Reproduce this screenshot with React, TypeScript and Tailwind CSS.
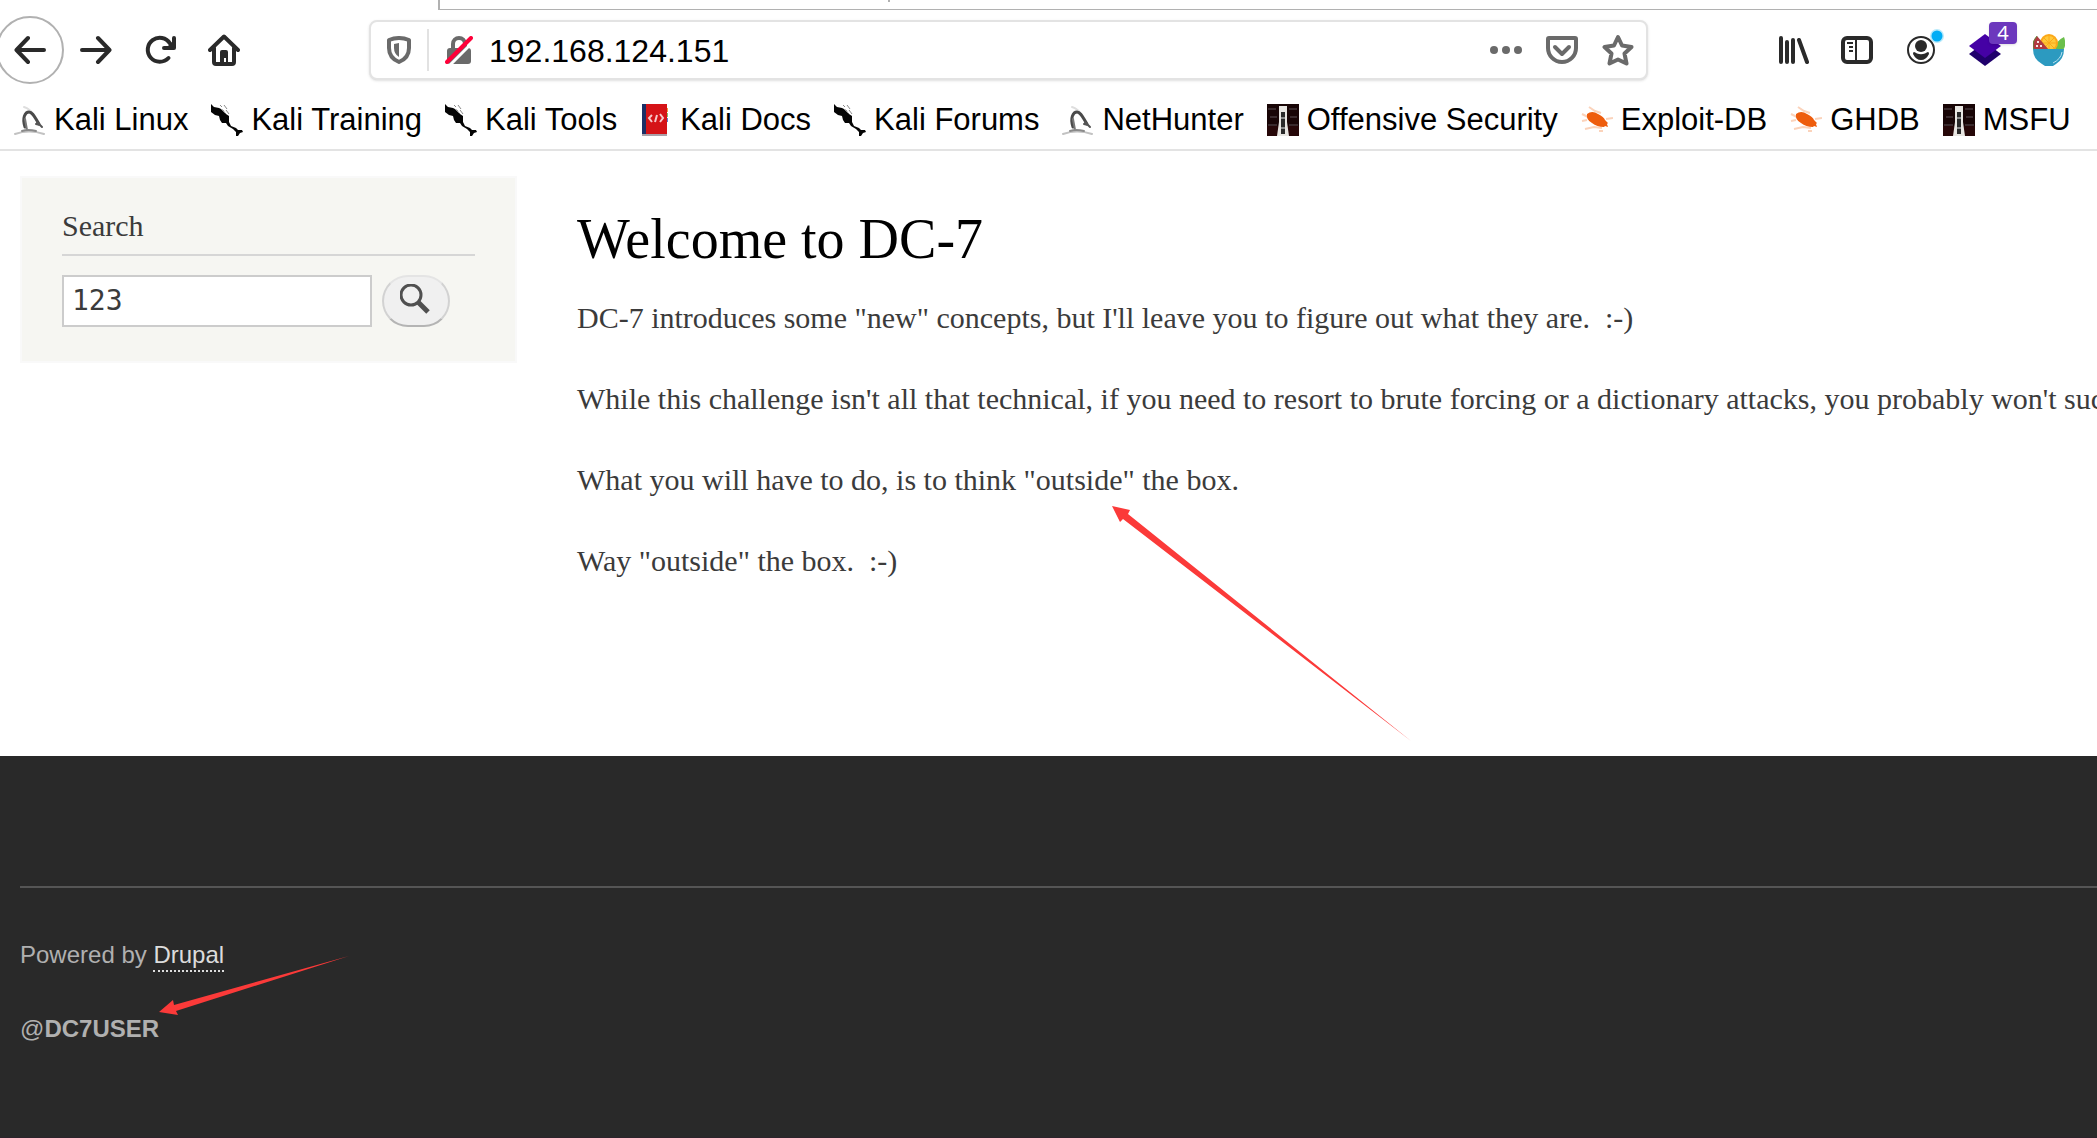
import React from "react";

type IconProps = { className?: string };

const Back = () => (
  <svg viewBox="0 0 32 32" className="size-8" fill="none" stroke="#2a2a2a" strokeWidth="4" strokeLinecap="round" strokeLinejoin="round">
    <path d="M14 4 2.500 16 14 28M3 16h27" />
  </svg>
);
const Forward = () => (
  <svg viewBox="0 0 32 32" className="size-8" fill="none" stroke="#2a2a2a" strokeWidth="4" strokeLinecap="round" strokeLinejoin="round">
    <path d="M18 4 29.500 16 18 28M29 16H2" />
  </svg>
);
const Reload = () => (
  <svg viewBox="0 0 32 32" className="size-8" fill="none" stroke="#2a2a2a" strokeWidth="4" strokeLinecap="round">
    <path d="M24.500 24A12 12 0 1 1 26 9.500" />
    <path d="M30 4v10M30 14H20" strokeLinejoin="round" />
    <path d="M28 8v6h-6z" fill="#2a2a2a" stroke="none" />
  </svg>
);
const Home = () => (
  <svg viewBox="0 0 32 32" className="size-8" fill="none" stroke="#2a2a2a" strokeWidth="4" strokeLinecap="round" strokeLinejoin="round">
    <path d="M2 16 16 2.500 30 16" />
    <path d="M6 14v14q0 2 2 2h16q2 0 2-2V14" />
    <path d="M12 30V18q0-2 2-2h4q2 0 2 2v12h-2v-6h-2v6z" fill="#2a2a2a" stroke="none" />
  </svg>
);
const Shield = () => (
  <svg viewBox="0 0 24 28" className="h-7 w-6">
    <path d="M2 4q10-4 20 0v8q0 10-10 14Q2 22 2 12z" fill="none" stroke="#6a6a6a" strokeWidth="4" strokeLinejoin="round" />
    <path d="M12 7v14q-5-3-5-9V8z" fill="#6a6a6a" />
  </svg>
);
const BrokenLock = () => (
  <svg viewBox="0 0 28 28" className="size-7">
    <path d="M8 14V8a6 6 0 0 1 12 0v6" fill="none" stroke="#6a6a6a" strokeWidth="4" />
    <rect x="2" y="12" width="24" height="16" rx="3" fill="#6a6a6a" />
    <path d="M5 29 29 5" stroke="#fff" strokeWidth="3" />
    <path d="M2 26 26 2" stroke="#ff0039" strokeWidth="4" strokeLinecap="round" />
  </svg>
);
const Dots = () => (
  <svg viewBox="0 0 32 32" className="size-8" fill="#6a6a6a">
    <circle cx="4" cy="16" r="4" />
    <circle cx="16" cy="16" r="4" />
    <circle cx="28" cy="16" r="4" />
  </svg>
);
const Pocket = () => (
  <svg viewBox="0 0 32 32" className="size-8" fill="none" stroke="#6a6a6a" strokeWidth="4" strokeLinecap="round" strokeLinejoin="round">
    <path d="M3 4h26q1 0 1 1v9a14 14 0 0 1-28 0V5q0-1 1-1z" />
    <path d="M9 13l7 7 7-7" />
  </svg>
);
const Star = () => (
  <svg viewBox="0 0 32 32" className="size-8" fill="none" stroke="#6a6a6a" strokeWidth="4" strokeLinejoin="round">
    <path d="M16 3l4 8.500 9.500 1.500-7 6.500 2 10-8.500-4-8.500 4 2-10-7-6.500L12 11.500z" />
  </svg>
);
const Library = () => (
  <svg viewBox="0 0 32 32" className="size-8" fill="none" stroke="#2a2a2a" strokeWidth="4" strokeLinecap="round">
    <path d="M4 4v24M10 8v20M16 6v22M22 6l8 22" />
  </svg>
);
const Sidebar = () => (
  <svg viewBox="0 0 32 32" className="size-8" fill="none" stroke="#2a2a2a">
    <rect x="2" y="4" width="28" height="24" rx="4" strokeWidth="4" />
    <path d="M15 4v24" strokeWidth="2" />
    <path d="M6 9h6M8 13h4M8 17h4" strokeWidth="2" />
  </svg>
);
const Account = () => (
  <svg viewBox="0 0 32 32" className="size-8 overflow-visible">
    <circle cx="16" cy="16" r="13" fill="none" stroke="#2a2a2a" strokeWidth="2" />
    <circle cx="16" cy="12" r="6" fill="#2a2a2a" />
    <path d="M9 18q-1 0-1 2 3 6 8 6t8-6q0-2-1-2-1 0-3 1.500-4 1.500-8 0Q10 18 9 18z" fill="#2a2a2a" />
    <circle cx="32" cy="2" r="7" fill="#b8eafb" />
    <circle cx="32" cy="2" r="5.500" fill="#00adf5" />
  </svg>
);
const Stack = () => (
  <svg viewBox="0 0 32 32" className="size-8">
    <path d="M0 20 16 8l16 12-16 12z" fill="#20006c" />
    <path d="M0 12 16 0l16 12-16 12z" fill="#4501a5" />
  </svg>
);
const FruitBowl = () => (
  <svg viewBox="0 0 32 32" className="size-8">
    <path d="M22 16q0-9 9-13 3 8-1 13z" fill="#6abf4b" />
    <circle cx="16" cy="9" r="9" fill="#fba819" />
    <circle cx="16" cy="9" r="7" fill="#ffc93a" />
    <path d="M16 2v14M9 9h14M21 4 11 14M11 4l10 10" stroke="#fba819" strokeWidth="1" />
    <path d="M4 2Q-3 9 1 16h15z" fill="#b13a40" />
    <path d="M4 2Q-2 9 1 16" fill="none" stroke="#5f8a3c" strokeWidth="1" />
    <path d="M4 8h2M7 12h2M3 12h2" stroke="#f7e5e5" strokeWidth="2" />
    <path d="M0 15h31q0 10-8 15l-3 2h-8l-3-2Q0 25 0 15z" fill="#2c9ac0" />
    <path d="M29 18q-1 7-9 11" fill="none" stroke="#bfe3ef" strokeWidth="1" />
  </svg>
);

const Dragon = ({ className }: IconProps) => (
  <svg viewBox="0 0 32 32" className={className} fill="none" strokeLinecap="round">
    <path d="M10 3q6 2 9 7" stroke="#dedede" strokeWidth="2" />
    <path d="M11 23C8 14 11 8 15 8c4 0 6 6 10 12" stroke="#4a4a4a" strokeWidth="3" />
    <path d="M11 15l2 11" stroke="#777" strokeWidth="2" />
    <path d="M23 18l5 5M22 20l4 1" stroke="#555" strokeWidth="2" />
    <path d="M1 30q14-5 29 0" stroke="#c2c2c2" strokeWidth="2" />
    <path d="M8 27q6-2 14 0" stroke="#8a8a8a" strokeWidth="2" />
  </svg>
);
const Knife = ({ className }: IconProps) => (
  <svg viewBox="0 0 32 32" className={className}>
    <path d="M0 0l3 3 5 1 4 2 3 4 3 2v6l2 4 5 2 2 2h4l1 2-3 1-2 3h-2v-4l-3-3-5-3-2-3h-4l-2-3-1-4-4-1-4-3z" fill="#050505" />
    <path d="M9 1l2 2M13 1l3 4M10 5l4 4M15 6l3 4" stroke="#8b8b8b" strokeWidth="1" />
  </svg>
);
const Book = ({ className }: IconProps) => (
  <svg viewBox="0 0 32 32" className={className}>
    <path d="M2 0h4v31H2z" fill="#1c2f66" />
    <path d="M2 30h25v2H2z" fill="#a9a0a8" />
    <path d="M6 0h21v30H6z" fill="#d51317" />
    <path d="M27 4h1v4h-1z" fill="#f09a3e" />
    <path d="M27 9h1v4h-1z" fill="#7fc46b" />
    <path d="M27 14h1v4h-1z" fill="#5b7fd0" />
    <path d="M12 11l-3 3 3 4M20 10l3 4-3 4M17 11l-2 7" fill="none" stroke="#f6c9ca" strokeWidth="2" />
  </svg>
);
const Tower = ({ className }: IconProps) => (
  <svg viewBox="0 0 32 32" className={className}>
    <path d="M0 0h32v32H0z" fill="#180506" />
    <path d="M0 22h32v10H0z" fill="#260708" />
    <path d="M1 5h8M3 13h7M1 21h9M22 5h8M23 13h7M22 21h9" stroke="#392a2d" strokeWidth="2" />
    <path d="M12 2h8v16l2 14H10l2-14z" fill="#e8e6e2" />
    <path d="M14 8h4v22h-4z" fill="#2a2a2a" />
    <path d="M14 14h4M14 24h4" stroke="#8a8a8a" strokeWidth="2" />
  </svg>
);
const Bug = ({ className }: IconProps) => (
  <svg viewBox="0 0 32 32" className={className} fill="none">
    <path d="M8 3l6 4 6 2M1 10l6 3M1 17l5-1M4 25l9-2 8 1M18 27l4 0M25 15l7-1" stroke="#fbd3bb" strokeWidth="2" />
    <path d="M6 10q5-4 11 0 6 3 7 6l3 3-1 1 1 3-3-1-1 1q-7 0-12-4-6-3-5-9z" fill="#ee5d0d" />
  </svg>
);

const bookmarks = [
  { label: "Kali Linux", Icon: Dragon },
  { label: "Kali Training", Icon: Knife },
  { label: "Kali Tools", Icon: Knife },
  { label: "Kali Docs", Icon: Book },
  { label: "Kali Forums", Icon: Knife },
  { label: "NetHunter", Icon: Dragon },
  { label: "Offensive Security", Icon: Tower },
  { label: "Exploit-DB", Icon: Bug },
  { label: "GHDB", Icon: Bug },
  { label: "MSFU", Icon: Tower },
];

function Toolbar() {
  return (
    <div className="flex h-20 items-center">
      <div className="flex shrink-0 items-center">
        <button aria-label="Back" className="-ml-1 flex size-[68px] items-center justify-center rounded-full border-2 border-[#b1b1b1]">
          <Back />
        </button>
        <div className="flex gap-8 pl-4">
          <button aria-label="Forward"><Forward /></button>
          <button aria-label="Reload"><Reload /></button>
          <button aria-label="Home"><Home /></button>
        </div>
      </div>
      <form className="mx-[129px] flex h-[60px] flex-1 items-center rounded-lg border-2 border-[#e3e3e3] bg-white pr-3 pl-4 shadow-sm" onSubmit={(e) => e.preventDefault()}>
        <button type="button" aria-label="Tracking protection"><Shield /></button>
        <div className="mx-4 h-[42px] w-0.5 bg-[#e2e2e2]" />
        <button type="button" aria-label="Connection not secure"><BrokenLock /></button>
        <input aria-label="Address" defaultValue="192.168.124.151" className="ml-4 min-w-0 flex-1 bg-transparent pt-0.5 text-[32px] leading-10 text-black outline-none" />
        <div className="flex gap-6">
          <button type="button" aria-label="Page actions"><Dots /></button>
          <button type="button" aria-label="Save to Pocket"><Pocket /></button>
          <button type="button" aria-label="Bookmark this page"><Star /></button>
        </div>
      </form>
      <div className="flex shrink-0 gap-8 pr-8">
        <button aria-label="Library"><Library /></button>
        <button aria-label="Sidebars"><Sidebar /></button>
        <button aria-label="Account"><Account /></button>
        <button aria-label="Extension" className="relative">
          <Stack />
          <span className="absolute -top-3 left-5 flex h-[22px] w-7 items-center justify-center rounded bg-[#6c38bd] font-['Noto_Sans'] text-xl text-white shadow">4</span>
        </button>
        <button aria-label="Fruit bowl"><FruitBowl /></button>
      </div>
    </div>
  );
}

function ArrowToOutside() {
  return (
    <svg viewBox="0 0 300 236" className="pointer-events-none absolute top-[330px] left-[535px] h-[236px] w-[300px]" fill="#fb3a39" aria-hidden="true">
      <path d="M0 0 18 4 16 8 299 235 11 13 8 16z" />
    </svg>
  );
}

function ArrowToUser() {
  return (
    <svg viewBox="0 0 190 60" className="pointer-events-none absolute -top-[17px] left-[139px] h-[60px] w-[190px]" fill="#fb3a39" aria-hidden="true">
      <path d="M0 56 14 44 15 49 190 0 17 55 19 59z" />
    </svg>
  );
}

export default function App() {
  return (
    <div className="flex min-h-screen flex-col overflow-hidden bg-white font-['Liberation_Sans',sans-serif]">
      <header className="border-b-2 border-[#e3e3e3]">
        <div className="ml-[438px] h-[10px] border-b border-l-2 border-[#b1b1b1] pl-[448px]">
          <div className="size-0.5 bg-[#b1b1b1]" />
        </div>
        <Toolbar />
        <nav className="flex h-[59px] gap-[23px] pt-[10px] pl-[14px]" aria-label="Bookmarks">
          {bookmarks.map(({ label, Icon }) => (
            <a key={label} href="#" className="flex h-10 shrink-0 items-center gap-2 text-[31px] leading-10 text-black">
              <Icon className="size-8" />
              {label}
            </a>
          ))}
        </nav>
      </header>

      <div className="flex h-[605px] pt-[25px] pl-5 font-['Liberation_Serif',serif] text-[#3b3b3b]">
        <aside className="h-[187px] w-[497px] shrink-0 border-2 border-[#f9f9f9] bg-[#f6f6f2] px-10 pt-7">
          <h2 className="border-b-2 border-[#d6d6d6] pb-2 text-[30px] leading-10">Search</h2>
          <form className="mt-[19px] flex gap-[10px]" onSubmit={(e) => e.preventDefault()}>
            <input aria-label="Search" defaultValue="123" className="h-[52px] w-[310px] border-2 border-[#ccc] bg-white px-2 pb-0.5 font-['DejaVu_Sans_Mono',monospace] text-[28px] text-[#3b3b3b] outline-none" />
            <button aria-label="Submit search" className="flex h-[52px] w-[68px] items-center justify-center rounded-full border-2 border-t-[#e4e4e4] border-r-[#d2d2d2] border-b-[#b4b4b4] border-l-[#d2d2d2] bg-[#f0f0f0]">
              <svg viewBox="0 0 30 30" className="mr-0.5 mb-1 size-[30px]" fill="none" stroke="#505050">
                <circle cx="11" cy="11" r="10" strokeWidth="3" />
                <path d="M18 18l10 10" strokeWidth="5" />
              </svg>
            </button>
          </form>
        </aside>

        <main className="relative ml-[60px] pt-[29px] text-[30px] leading-[41px] whitespace-pre">
          <h1 className="mb-6 text-[56px] leading-[68px] text-black">Welcome to DC-7</h1>
          <div className="flex flex-col gap-10">
            <p>{"DC-7 introduces some \"new\" concepts, but I'll leave you to figure out what they are.  :-)"}</p>
            <p>{"While this challenge isn't all that technical, if you need to resort to brute forcing or a dictionary attacks, you probably won't succeed."}</p>
            <p>{"What you will have to do, is to think \"outside\" the box."}</p>
            <p>{"Way \"outside\" the box.  :-)"}</p>
          </div>
          <ArrowToOutside />
        </main>
      </div>

      <footer className="flex-1 border-b border-[#2c232b] bg-[#292929] pt-[130px] pl-5 text-2xl text-[#b0b0b0]">
        <div className="border-t-2 border-[#555] pt-[49px]">
          <p className="leading-9">
            Powered by <a href="#" className="border-b-2 border-dotted border-[#ddd] pb-0.5 text-[#dcdcdc]">Drupal</a>
          </p>
          <div className="relative pt-[38px]">
            <p className="leading-9 font-bold">
              <span className="font-normal">@</span>DC7USER
            </p>
            <ArrowToUser />
          </div>
        </div>
      </footer>
    </div>
  );
}
